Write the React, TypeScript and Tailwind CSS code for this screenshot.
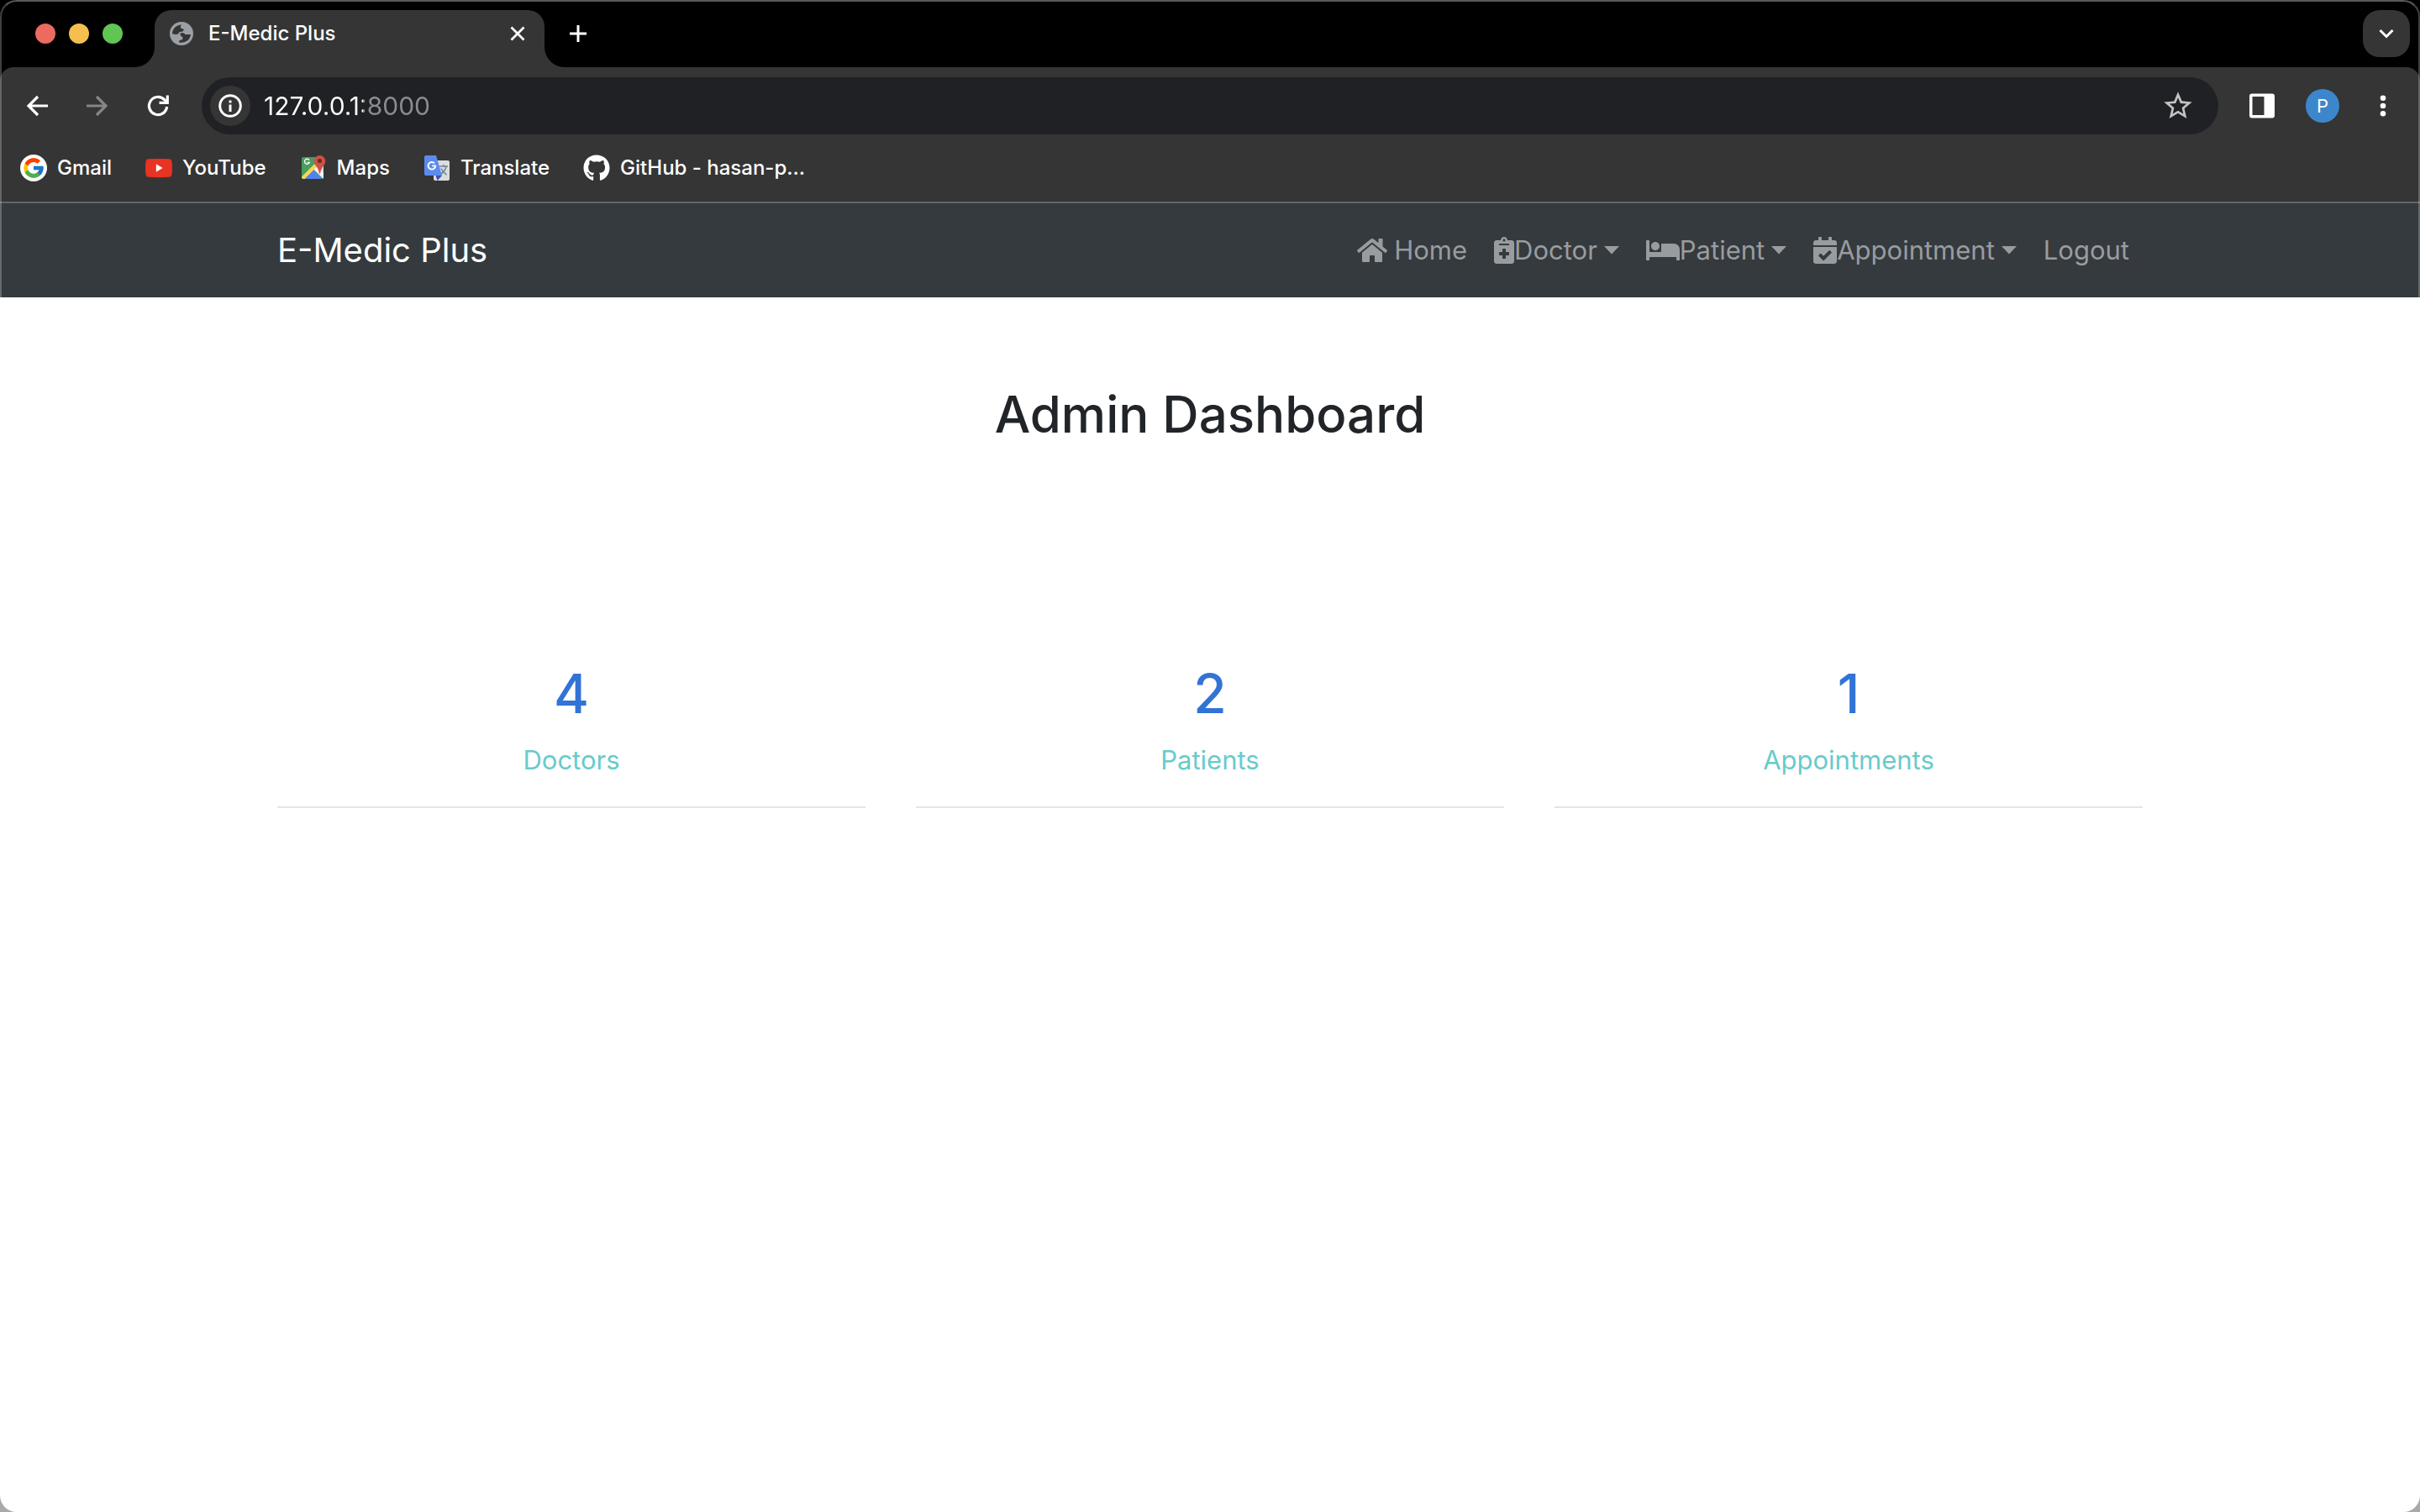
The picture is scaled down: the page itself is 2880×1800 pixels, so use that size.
import type { ReactNode } from "react";
import { FaBed, FaCalendarCheck, FaGithub, FaHome, FaNotesMedical } from "react-icons/fa";
import { FcGoogle } from "react-icons/fc";
import { MdStarOutline } from "react-icons/md";

function TabFlare({ flip = false }: { flip?: boolean }) {
  return (
    <svg viewBox="0 0 24 24" className="size-6 self-end fill-[#353535]" aria-hidden="true">
      <path d={flip ? "M0 0A24 24 0 0 0 24 24H0Z" : "M24 0A24 24 0 0 1 0 24H24Z"} />
    </svg>
  );
}

function GlobeIcon() {
  return (
    <svg viewBox="0 0 28 28" className="size-7 fill-[#353535]" aria-hidden="true">
      <circle cx="14" cy="14" r="14" fill="#9aa0a6" />
      <path d="M3 14.300C3 8.500 7.500 3.900 13.800 3.300C12.300 6.200 12.600 8 15.300 8.300C17 8.600 17.200 10.600 15.600 11.300C13.500 12.300 11 11.600 10.700 13.300C10.500 15.200 7 15.300 3 14.300Z" />
      <path d="M12.500 13.700C15.500 13 17.500 13.300 18.300 15H24.900C24.500 20.800 19.500 25.500 11.300 24.700V22C14.500 22 16 20.500 15.500 18.700C15 17.300 12.300 17.300 12.500 13.700Z" />
    </svg>
  );
}

function TabStrip() {
  return (
    <div className="flex h-20 items-center bg-black pl-[42px] pr-3">
      <div className="flex gap-4">
        <button aria-label="Close window" className="size-6 rounded-full bg-[#ec6a5e]" />
        <button aria-label="Minimize window" className="size-6 rounded-full bg-[#f4bf4f]" />
        <button aria-label="Zoom window" className="size-6 rounded-full bg-[#61c554]" />
      </div>
      <div className="ml-3.5 flex h-full">
        <TabFlare />
        <div className="flex h-[68px] w-[464px] items-center self-end rounded-t-[20px] bg-[#353535] pb-3 pl-[18px] pr-4">
          <GlobeIcon />
          <span className="ml-[18px] text-2xl font-medium text-white">E-Medic Plus</span>
          <button aria-label="Close tab" className="ml-auto flex size-8 items-center justify-center">
            <svg viewBox="0 0 18 18" className="size-[18px] stroke-white stroke-[2.8]" aria-hidden="true">
              <path d="M1.5 1.5l15 15M16.500 1.500l-15 15" />
            </svg>
          </button>
        </div>
        <TabFlare flip />
      </div>
      <button aria-label="New tab" className="flex size-8 items-center justify-center">
        <svg viewBox="0 0 20 20" className="size-5 stroke-white stroke-3" aria-hidden="true">
          <path d="M10 0v20M0 10h20" />
        </svg>
      </button>
      <button
        aria-label="Search tabs"
        className="ml-auto flex size-14 items-center justify-center rounded-[20px] bg-[#353535]"
      >
        <svg viewBox="0 0 18 12" className="h-3 w-[18px] fill-none stroke-white stroke-3" aria-hidden="true">
          <path d="M1.500 2L9 9.500L16.500 2" />
        </svg>
      </button>
    </div>
  );
}

function Toolbar() {
  return (
    <div className="flex h-[92px] items-center">
      <div className="flex items-center gap-10 pl-7">
        <button aria-label="Back">
          <svg viewBox="0 0 32 32" className="size-8 fill-none stroke-white stroke-[3.2]" aria-hidden="true">
            <path d="M29 16H6.500M17 5L6 16l11 11" />
          </svg>
        </button>
        <button aria-label="Forward">
          <svg viewBox="0 0 32 32" className="size-8 fill-none stroke-[#868686] stroke-[3.2]" aria-hidden="true">
            <path d="M3 16h22.500M15 5l11 11l-11 11" />
          </svg>
        </button>
        <button aria-label="Reload">
          <svg viewBox="0 0 32 32" className="size-8 fill-none stroke-white stroke-[3.2]" aria-hidden="true">
            <path d="M26.600 17A10.600 10.600 0 1 1 23.500 8.500L27 12" />
            <path d="M27.300 3.500V12.300H17.500" />
          </svg>
        </button>
      </div>
      <div className="ml-9 flex h-[68px] flex-1 items-center rounded-full bg-[#202125] pl-2.5 pr-7">
        <button aria-label="Site information" className="flex size-12 items-center justify-center rounded-full bg-[#353535]">
          <svg viewBox="0 0 28 28" className="size-7" aria-hidden="true">
            <circle cx="14" cy="14" r="12.300" className="fill-none stroke-white stroke-3" />
            <path d="M12.500 12.500h3V21h-3zM12.500 7.500h3v3h-3z" className="fill-white" />
          </svg>
        </button>
        <input
          aria-label="Address"
          defaultValue="127.0.0.1:8000"
          className="ml-4 min-w-0 flex-1 bg-[linear-gradient(to_right,#ffffff_118px,#8c8d8f_118px)] bg-clip-text text-[30px] text-transparent caret-white outline-none"
        />
        <button aria-label="Bookmark this page">
          <MdStarOutline className="size-10 text-[#c3c3c3]" />
        </button>
      </div>
      <div className="flex items-center pl-9 pr-7">
        <button aria-label="Side panel">
          <svg viewBox="0 0 32 32" className="size-8" aria-hidden="true">
            <path d="M4 1.500h24a3 3 0 0 1 3 3v23a3 3 0 0 1-3 3H4a3 3 0 0 1-3-3v-23a3 3 0 0 1 3-3zM4.500 5v22H18.500V5z" fillRule="evenodd" className="fill-white" />
          </svg>
        </button>
        <button aria-label="Profile" className="ml-9 size-10 rounded-full bg-[#3c87cc] text-[22px] text-white">
          P
        </button>
        <button aria-label="Browser menu" className="ml-9">
          <svg viewBox="0 0 32 32" className="size-8 fill-white" aria-hidden="true">
            <circle cx="16" cy="6.700" r="3.300" />
            <circle cx="16" cy="16" r="3.300" />
            <circle cx="16" cy="25.300" r="3.300" />
          </svg>
        </button>
      </div>
    </div>
  );
}

function GoogleIcon() {
  return (
    <span className="flex size-8 items-center justify-center rounded-full bg-white">
      <FcGoogle className="size-7" />
    </span>
  );
}

function YouTubeIcon() {
  return (
    <svg viewBox="0 0 32 32" className="size-8" aria-hidden="true">
      <path d="M4 5.300Q16 4.500 28 5.300Q31.300 5.500 31.600 9Q32.300 16 31.600 23Q31.300 26.500 28 26.800Q16 27.500 4 26.800Q.7 26.500.4 23Q-.3 16 .4 9Q.7 5.500 4 5.300Z" fill="#e93323" />
      <path d="M12.800 11.300v9.400l7.800-4.700z" fill="#fff" />
    </svg>
  );
}

function MapsIcon() {
  return (
    <svg viewBox="0 0 32 32" className="size-8" aria-hidden="true">
      <defs>
        <clipPath id="map-sheet">
          <rect x="2" y="3" width="26" height="26" rx="2" />
        </clipPath>
      </defs>
      <g clipPath="url(#map-sheet)">
        <rect x="2" y="3" width="26" height="26" fill="#4a9d5f" />
        <path d="M15 16L28 29V8L23 5z" fill="#dcdcdc" />
        <path d="M28 29L15 16L18.500 12.500L28 22z" fill="#f4f4f4" />
        <path d="M4 29L15.500 17.500L27 29z" fill="#5083ec" />
        <path d="M2 29V26.500L17 11.500L20.500 14L5.500 29z" fill="#f7d857" />
      </g>
      <path d="M11 6.600A3 3 0 1 0 11.300 9.300H8.600" fill="none" stroke="#fff" strokeWidth="1.300" />
      <path d="M23.500 1a6.700 6.700 0 0 1 6.700 6.700c0 5.300-5.200 6.800-6.200 15h-1c-1-8.200-6.200-9.700-6.200-15A6.700 6.700 0 0 1 23.500 1z" fill="#cd5246" />
      <circle cx="23.500" cy="7.600" r="2.500" fill="#6f2620" />
    </svg>
  );
}

function TranslateIcon() {
  return (
    <svg viewBox="0 0 32 32" className="size-8" aria-hidden="true">
      <rect x="12" y="7" width="19" height="24" rx="2" fill="#dcdcdc" />
      <path d="M19 14h10M24 12v2M27 14c-1 5-4 8-7.500 10M21 16.500c1.500 3.500 4 6 6.500 7.500" fill="none" stroke="#6f8794" strokeWidth="1.600" />
      <path d="M14.500 25H22l-5.500 6z" fill="#3a4fb5" />
      <path d="M3 1h12l7 24H3a2 2 0 0 1-2-2V3a2 2 0 0 1 2-2z" fill="#5b8bee" />
      <path d="M13 10.300A4.300 4.300 0 1 0 14.200 13.400H10.200" fill="none" stroke="#fff" strokeWidth="1.900" />
    </svg>
  );
}

const bookmarks: { label: string; icon: ReactNode }[] = [
  { label: "Gmail", icon: <GoogleIcon /> },
  { label: "YouTube", icon: <YouTubeIcon /> },
  { label: "Maps", icon: <MapsIcon /> },
  { label: "Translate", icon: <TranslateIcon /> },
  { label: "GitHub - hasan-p...", icon: <FaGithub className="size-8" /> },
];

function BookmarksBar() {
  return (
    <nav aria-label="Bookmarks" className="flex h-[70px] items-center gap-10 border-b-2 border-[#666666] pb-3 pl-6">
      {bookmarks.map(({ label, icon }) => (
        <a key={label} href="#" className="flex items-center gap-3 text-2xl font-medium text-white">
          {icon}
          {label}
        </a>
      ))}
    </nav>
  );
}

const menus: { label: string; icon: ReactNode }[] = [
  { label: "Doctor", icon: <FaNotesMedical className="h-8 w-6" /> },
  { label: "Patient", icon: <FaBed className="h-8 w-10" /> },
  { label: "Appointment", icon: <FaCalendarCheck className="h-8 w-7" /> },
];

function SiteNav() {
  return (
    <header className="bg-[#353a3e]">
      <div className="mx-auto flex h-28 max-w-[2280px] items-center justify-between px-[30px]">
        <a href="#" className="text-[40px] text-white">
          E-Medic Plus
        </a>
        <nav aria-label="Main" className="flex text-[31px] text-[#999c9f]">
          <a href="#" className="flex items-center gap-2 px-4">
            <FaHome className="h-8 w-9" />
            Home
          </a>
          {menus.map(({ label, icon }) => (
            <button key={label} className="flex items-center px-4">
              {icon}
              {label}
              <svg viewBox="0 0 18 10" className="ml-2 h-2.5 w-[18px] fill-current" aria-hidden="true">
                <path d="M0 0h18L9 9.500z" />
              </svg>
            </button>
          ))}
          <a href="#" className="flex items-center px-4">
            Logout
          </a>
        </nav>
      </div>
    </header>
  );
}

const stats = [
  { value: 4, label: "Doctors" },
  { value: 2, label: "Patients" },
  { value: 1, label: "Appointments" },
];

function Dashboard() {
  return (
    <main className="mx-auto w-full max-w-[2280px] px-[30px] pt-[100px] text-center">
      <h1 className="text-[60px] leading-[78px] font-medium text-[#212529]">Admin Dashboard</h1>
      <div className="mt-[255px] grid grid-cols-3 gap-[60px]">
        {stats.map(({ value, label }) => (
          <section key={label} className="border-b-2 border-[#e5e5e5] pb-[31px]">
            <h2 className="text-[64px] leading-[78px] font-medium text-[#3273d6]">{value}</h2>
            <p className="mt-4 text-[31px] leading-[48px] text-[#68cbcb]">{label}</p>
          </section>
        ))}
      </div>
    </main>
  );
}

export default function App() {
  return (
    <div className="min-h-screen bg-linear-to-b from-black to-[#aaaaaa] font-['Inter',sans-serif]">
      <div className="relative flex min-h-screen flex-col overflow-hidden rounded-[20px] bg-white">
        <div className="bg-black">
          <TabStrip />
          <div className="rounded-t-[16px] bg-[#353535]">
            <Toolbar />
            <BookmarksBar />
          </div>
        </div>
        <SiteNav />
        <Dashboard />
        <div className="pointer-events-none absolute inset-0 rounded-[20px] border-2 border-white/25 border-t-white/35" />
      </div>
    </div>
  );
}
